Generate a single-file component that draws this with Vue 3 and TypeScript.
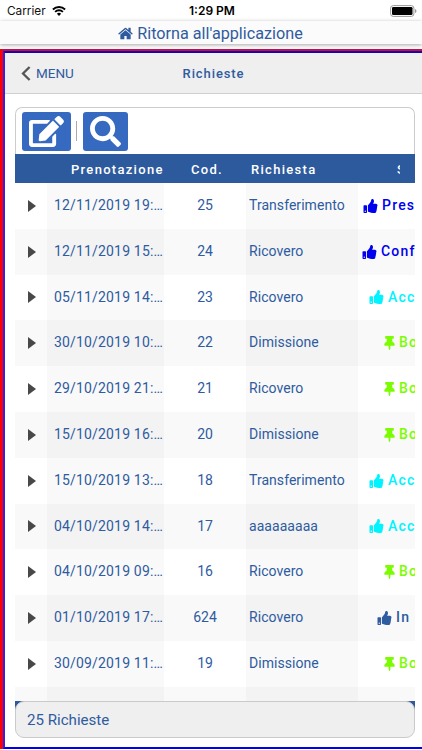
<script setup lang="ts">
type Kind = 'thumb' | 'pin'
interface Row {
  date: string
  code: string
  type: string
  status: string
  kind: Kind
  tone: string
}

const rows: Row[] = [
  { date: '12/11/2019 19:…', code: '25', type: 'Transferimento', status: 'Pres.', kind: 'thumb', tone: 'blue pres' },
  { date: '12/11/2019 15:…', code: '24', type: 'Ricovero', status: 'Conf', kind: 'thumb', tone: 'blue conf' },
  { date: '05/11/2019 14:…', code: '23', type: 'Ricovero', status: 'Acc', kind: 'thumb', tone: 'cyan' },
  { date: '30/10/2019 10:…', code: '22', type: 'Dimissione', status: 'Bo', kind: 'pin', tone: 'green' },
  { date: '29/10/2019 21:…', code: '21', type: 'Ricovero', status: 'Bo', kind: 'pin', tone: 'green' },
  { date: '15/10/2019 16:…', code: '20', type: 'Dimissione', status: 'Bo', kind: 'pin', tone: 'green' },
  { date: '15/10/2019 13:…', code: '18', type: 'Transferimento', status: 'Acc', kind: 'thumb', tone: 'cyan' },
  { date: '04/10/2019 14:…', code: '17', type: 'aaaaaaaaa', status: 'Acc', kind: 'thumb', tone: 'cyan' },
  { date: '04/10/2019 09:…', code: '16', type: 'Ricovero', status: 'Bo', kind: 'pin', tone: 'green' },
  { date: '01/10/2019 17:…', code: '624', type: 'Ricovero', status: 'In c', kind: 'thumb', tone: 'navy' },
  { date: '30/09/2019 11:…', code: '19', type: 'Dimissione', status: 'Bo', kind: 'pin', tone: 'green' },
]

const icons: Record<Kind, { box: string; d: string }> = {
  thumb: {
    box: '0 0 512 512',
    d: 'M104 224H24c-13.255 0-24 10.745-24 24v240c0 13.255 10.745 24 24 24h80c13.255 0 24-10.745 24-24V248c0-13.255-10.745-24-24-24zM64 472c-13.255 0-24-10.745-24-24s10.745-24 24-24 24 10.745 24 24-10.745 24-24 24zM384 81.452c0 42.416-25.97 66.208-33.277 94.548h101.723c33.397 0 59.397 27.746 59.553 58.098.084 17.938-7.546 37.249-19.439 49.197l-.11.11c9.836 23.337 8.237 56.037-9.308 79.469 8.681 25.895-.069 57.704-16.382 74.757 4.298 17.598 2.244 32.575-6.148 44.632C440.202 511.587 389.616 512 346.839 512l-2.845-.001c-48.287-.017-87.806-17.598-119.56-31.725-15.957-7.099-36.821-15.887-52.651-16.178-6.54-.12-11.783-5.457-11.783-11.998v-213.77c0-3.2 1.282-6.271 3.558-8.521 39.614-39.144 56.648-80.587 89.117-113.111 14.804-14.832 20.188-37.236 25.393-58.902C282.515 39.293 291.817 0 312 0c24 0 72 8 72 81.452z',
  },
  pin: {
    box: '0 0 384 512',
    d: 'M298.028 214.267L285.793 96H328c13.255 0 24-10.745 24-24V24c0-13.255-10.745-24-24-24H56C42.745 0 32 10.745 32 24v48c0 13.255 10.745 24 24 24h42.207L85.972 214.267C37.465 236.82 0 277.261 0 328c0 13.255 10.745 24 24 24h136v104.007c0 1.242.289 2.467.845 3.578l24 48c2.941 5.882 11.364 5.893 14.311 0l24-48a8.008 8.008 0 0 0 .845-3.578V352h136c13.255 0 24-10.745 24-24-.001-51.183-37.983-91.42-85.973-113.733z',
  },
}
</script>

<template>
  <div class="screen">
    <div class="statusbar">
      <div class="carrier">
        <span>Carrier</span>
        <svg class="wifi" viewBox="0 0 14 10">
          <path d="M7 9.9 4.9 7.7a3 3 0 0 1 4.2 0z" fill="#000" />
          <path d="M3.1 5.9a5.6 5.6 0 0 1 7.8 0M.9 3.5a8.8 8.8 0 0 1 12.2 0" fill="none" stroke="#000" stroke-width="1.9" />
        </svg>
      </div>
      <span class="clock">1:29 PM</span>
      <div class="power">
        <svg class="battery" viewBox="0 0 27 12">
          <rect x=".6" y=".6" width="23.3" height="10.8" rx="2.6" fill="#fff" stroke="#999" />
          <rect x="2" y="2" width="20.5" height="8" rx="1.3" />
          <path d="M25 4v4q1.5-.6 1.5-2T25 4z" fill="#999" />
        </svg>
      </div>
    </div>

    <div class="back">
      <svg class="home" viewBox="60 230 1672 1310">
        <path d="M1472 992v480q0 26-19 45t-45 19h-384v-384h-256v384h-384q-26 0-45-19t-19-45v-480q0-1 .5-3t.5-3l575-474 575 474q1 2 1 6zm223-69l-62 74q-8 9-21 11h-3q-13 0-21-7l-692-577-692 577q-12 8-24 7-13-2-21-11l-62-74q-8-10-7-23.5t11-21.5l719-599q32-26 76-26t76 26l244 204v-195q0-14 9-23t23-9h192q14 0 23 9t9 23v408l219 182q10 8 11 21.5t-7 23.5z" />
      </svg>
      <span>Ritorna all'applicazione</span>
    </div>

    <div class="frame">
      <div class="inner">
        <header class="nav">
          <div class="menu">
            <svg class="chevron" viewBox="0 0 10 15"><path d="M8.6 1 2 7.5 8.6 14" /></svg>
            <span>MENU</span>
          </div>
          <h1>Richieste</h1>
        </header>

        <main class="panel">
          <div class="toolbar">
            <button class="tool edit" aria-label="Nuova">
              <svg viewBox="0 0 576 512">
                <path d="M402.6 83.2l90.2 90.2c3.8 3.8 3.8 10 0 13.8L274.4 405.6l-92.8 10.3c-12.4 1.4-22.9-9.1-21.5-21.5l10.3-92.8L388.8 83.2c3.8-3.8 10-3.8 13.8 0zm162-22.9l-48.8-48.8c-15.2-15.2-39.9-15.2-55.2 0l-35.4 35.4c-3.8 3.8-3.8 10 0 13.8l90.2 90.2c3.8 3.8 10 3.8 13.8 0l35.4-35.4c15.2-15.3 15.2-40 0-55.2zM384 346.2V448H64V128h229.8c3.2 0 6.2-1.3 8.5-3.5l40-40c7.6-7.6 2.2-20.5-8.5-20.5H48C21.5 64 0 85.5 0 112v352c0 26.5 21.5 48 48 48h352c26.5 0 48-21.5 48-48V306.2c0-10.7-12.9-16-20.5-8.5l-40 40c-2.2 2.3-3.5 5.3-3.5 8.5z" />
              </svg>
            </button>
            <i class="divider"></i>
            <button class="tool search" aria-label="Cerca">
              <svg viewBox="0 0 512 512">
                <path d="M505 442.7L405.3 343c-4.5-4.5-10.6-7-17-7H372c27.6-35.3 44-79.7 44-128C416 93.1 322.9 0 208 0S0 93.1 0 208s93.1 208 208 208c48.3 0 92.7-16.4 128-44v16.3c0 6.4 2.5 12.5 7 17l99.7 99.7c9.4 9.4 24.6 9.4 33.9 0l28.3-28.3c9.4-9.4 9.4-24.6.1-34zM208 336c-70.7 0-128-57.2-128-128 0-70.7 57.2-128 128-128 70.7 0 128 57.2 128 128 0 70.7-57.2 128-128 128z" />
              </svg>
            </button>
          </div>

          <div class="grid head">
            <span></span>
            <span class="h-date">Prenotazione</span>
            <span class="h-code">Cod.</span>
            <span class="h-type">Richiesta</span>
            <span class="h-status"><b>S</b></span>
          </div>

          <div class="body">
            <div v-for="row in rows" :key="row.code" class="grid row">
              <span class="expand">
                <svg viewBox="0 0 8 12"><path d="M0 0 8 6 0 12z" /></svg>
              </span>
              <span class="date shade">{{ row.date }}</span>
              <span class="code">{{ row.code }}</span>
              <span class="type shade">{{ row.type }}</span>
              <span class="status" :class="row.tone">
                <svg :class="row.kind" :viewBox="icons[row.kind].box"><path :d="icons[row.kind].d" /></svg>
                <b>{{ row.status }}</b>
              </span>
            </div>
            <div class="grid row">
              <span></span><span class="shade"></span><span></span><span class="shade"></span><span></span>
            </div>
          </div>

          <div class="footwrap">
            <footer>25 Richieste</footer>
          </div>
        </main>
      </div>
    </div>
  </div>
</template>

<style>
body {
  background: #fff;
  overflow: hidden;
}
</style>

<style scoped>
* {
  box-sizing: border-box;
}
.screen {
  width: 422px;
  height: 750px;
  display: flex;
  flex-direction: column;
  overflow: hidden;
  background: #fff;
  color: #2f5b9f;
  font-family: Roboto, "Liberation Sans", sans-serif;
}
.statusbar {
  height: 21px;
  flex: none;
  display: grid;
  grid-template-columns: 1fr auto 1fr;
  align-items: center;
  padding: 1px 5px 0 7px;
  font: 11.8px/20px Inter, sans-serif;
  color: #111;
}
.carrier {
  display: flex;
  align-items: center;
  gap: 6px;
}
.wifi {
  width: 14px;
  height: 10px;
}
.clock {
  font-size: 12px;
  font-weight: 600;
  color: #000;
}
.power {
  display: flex;
  justify-content: flex-end;
}
.battery {
  width: 27px;
  height: 12px;
}
.back {
  height: 23px;
  flex: none;
  display: flex;
  justify-content: center;
  align-items: center;
  gap: 4px;
  padding: 2px 1px 0 0;
  background: #fbfbfb;
  box-shadow: 0 1px 4px rgba(0, 0, 0, 0.35);
  font-size: 16.2px;
  z-index: 1;
}
.home {
  width: 15px;
  height: 13px;
  fill: currentColor;
}
.frame {
  height: 700px;
  flex: none;
  margin-top: 5px;
  border-top: 2px solid #c4103c;
  border-left: 3px solid #f00;
}
.inner {
  height: 698px;
  border: 2px solid #00e;
  border-top-color: #1800b4;
  border-left-color: #3020f0;
  border-right: 0;
}
.nav {
  height: 41px;
  display: grid;
  grid-template-columns: 1fr auto 1fr;
  align-items: center;
  padding-left: 16px;
  padding-right: 16px;
  background: #efefef;
  border-bottom: 1px solid #d0d0d0;
}
.menu {
  display: flex;
  align-items: center;
  gap: 5px;
  font-size: 13.5px;
}
.chevron {
  width: 10px;
  height: 15px;
  fill: none;
  stroke: #555;
  stroke-width: 2.3;
}
h1 {
  margin: 0;
  font-size: 13px;
  font-weight: 500;
  letter-spacing: 0.9px;
}
.panel {
  width: 400px;
  margin: 13px 0 0 10px;
}
.toolbar {
  height: 47px;
  display: flex;
  align-items: center;
  padding: 0 0 0 6px;
  border: 1px solid #ccc;
  border-bottom: 0;
  border-radius: 7px 7px 0 0;
}
.tool {
  height: 39px;
  padding: 0;
  border: 0;
  border-radius: 3px;
  background: #356ac0;
  display: flex;
  align-items: center;
  justify-content: center;
}
.tool svg {
  fill: #fff;
  height: 31px;
}
.edit {
  width: 49px;
}
.search {
  width: 45px;
}
.divider {
  width: 1px;
  height: 20px;
  margin: 0 6px 0 5px;
  background: #aaa;
}
.grid {
  display: grid;
  grid-template-columns: 32px 117px 82px 112px 57px;
}
.head {
  height: 29px;
  line-height: 31px;
  background: #2d5a9c;
  color: #fff;
  font-size: 13px;
  font-weight: 500;
  letter-spacing: 1.3px;
}
.h-date {
  padding-left: 24px;
}
.h-code {
  padding-left: 27px;
}
.h-type {
  padding-left: 5px;
}
.h-status {
  display: flex;
  padding-left: 39px;
}
.h-status b {
  width: 3px;
  overflow: hidden;
  font-weight: 500;
}
.body {
  height: 518px;
  overflow: hidden;
}
.row {
  height: 45.8px;
  line-height: 45.8px;
  font-size: 14px;
}
.row:nth-child(even) {
  background: #f9f9f9;
}
.shade {
  background: #f9f9f9;
}
.row:nth-child(even) .shade {
  background: #f3f3f3;
}
.expand {
  display: flex;
  align-items: center;
  padding-left: 13px;
}
.expand svg {
  width: 8px;
  height: 12px;
  fill: #484848;
}
.date {
  padding-left: 7px;
  letter-spacing: 0.17px;
  white-space: nowrap;
}
.code {
  text-align: center;
}
.type {
  padding-left: 3px;
  letter-spacing: 0.05px;
}
.status {
  display: flex;
  align-items: center;
  overflow: hidden;
  gap: 4px;
  white-space: nowrap;
  letter-spacing: 1.2px;
}
.status b {
  font-weight: 500;
}
.status svg {
  flex: none;
  height: 14px;
  fill: currentColor;
}
.thumb {
  width: 15px;
}
.pin {
  width: 11px;
}
.blue {
  color: #00e;
}
.pres {
  padding-left: 5px;
}
.conf {
  padding-left: 4px;
}
.cyan {
  color: #00f4ff;
  padding-left: 11px;
}
.green {
  color: #7cfc00;
  padding-left: 26px;
}
.navy {
  padding-left: 19px;
}
.footwrap {
  height: 37px;
  background: linear-gradient(#2d5a9c 50%, #fff 50%);
}
footer {
  height: 37px;
  padding: 1px 0 0 11px;
  border: 1px solid #c8cacc;
  border-radius: 9px;
  background: #efefef;
  font-size: 15.1px;
  line-height: 35px;
}
</style>
